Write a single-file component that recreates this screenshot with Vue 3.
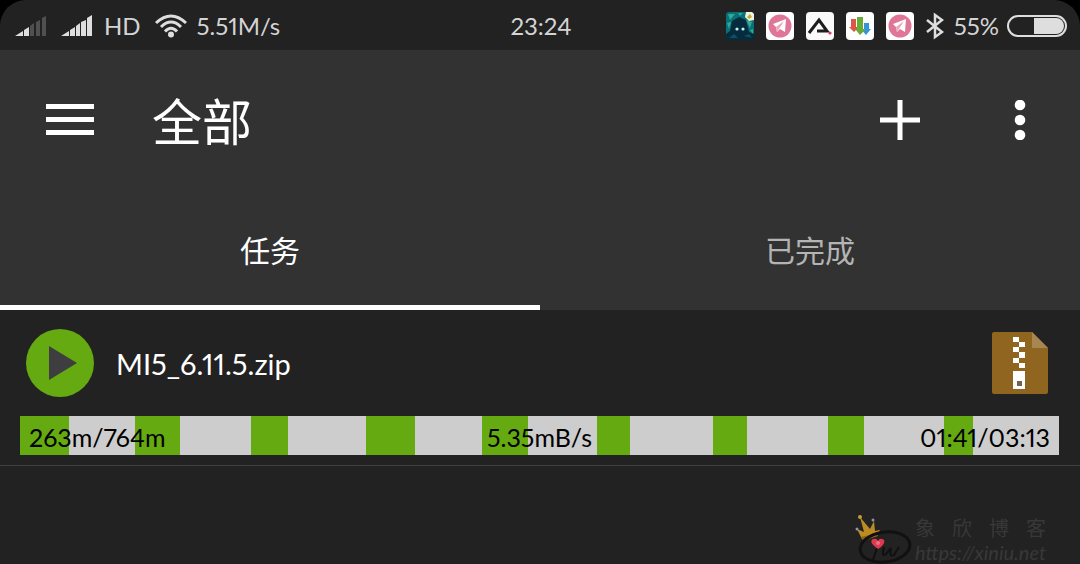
<script setup>
const segments = [49, 45, 37, 49, 46, 33, 34, 36, 30].map((w) => (w / 115.44) * 100)
</script>

<template>
  <main class="screen">
    <div class="status-frame">
      <header class="status">
        <div class="group left">
          <svg class="signal" viewBox="0 0 32 22" aria-label="SIM 1">
            <path fill="#dedede" d="M0 21L8 16V21ZM9 15L14 12V21H9Z" />
            <path fill="#505050" d="M15 11L19 8V21H15ZM21 7L25 5V21H21ZM27 3L31 1V21H27Z" />
          </svg>
          <svg class="signal second" viewBox="0 0 32 22" aria-label="SIM 2">
            <path fill="#dedede" d="M0 21L8 16V21ZM9 15L14 12V21H9ZM15 11L19 8V21H15ZM20 7L25 5V21H20ZM26 3L31 0V21H26Z" />
          </svg>
          <span class="hd">HD</span>
          <svg class="wifi" viewBox="0 0 32 24" aria-label="Wi-Fi">
            <g fill="none" stroke="#dedede" stroke-width="3">
              <path d="M1 9Q16-5 31 9M6 13Q16 3 26 13M10 17.500Q16 11 22 17.500" />
            </g>
            <circle cx="16" cy="20.500" r="3" fill="#dedede" />
          </svg>
          <span>5.51M/s</span>
        </div>
        <time class="clock">23:24</time>
        <div class="group right">
          <svg class="app" viewBox="0 0 28 28">
            <rect width="28" height="28" rx="3" fill="#087078" />
            <path fill="#35a894" d="M2 2H9L4 8ZM20 8L26 10L24 16ZM1 11L5 10L3 17ZM12 1H17L14 4ZM24 18L27 17V22Z" />
            <path fill="#062b3c" d="M0 28V22L4 19L6 9L13 5L20 8L23 20L28 22V28Z" />
            <path fill="#0a5261" d="M3 26L8 22L12 26ZM18 24L23 22L26 26Z" />
            <path fill="#eef4df" d="M20 0H26L28 2V8L23 9L19 5Z" />
            <path fill="#c2ae32" d="M24 2L26 5L23 7L21 5Z" />
            <circle cx="11" cy="17" r="1.600" fill="#b8f5fa" /><circle cx="17" cy="17" r="1.600" fill="#b8f5fa" />
          </svg>
          <svg class="app" viewBox="0 0 28 28">
            <rect width="28" height="28" rx="4" fill="#fff" /><circle cx="14" cy="14" r="11.500" fill="#df7698" />
            <path fill="#fff" d="M7 12L20 7L19 20L14 17L11 20L10 15Z" />
            <path fill="#eaa9bd" d="M10 15L18 9L13 17L11 20Z" />
          </svg>
          <svg class="app" viewBox="0 0 28 28">
            <rect width="28" height="28" rx="4" fill="#fafafa" />
            <path d="M3 21L13 8L21 19H11" fill="none" stroke="#1d1d1d" stroke-width="3" />
            <circle cx="24" cy="21" r="1.600" fill="#dc3b70" />
          </svg>
          <svg class="app" viewBox="0 0 28 28">
            <rect width="28" height="28" rx="4" fill="#fff" />
            <path fill="#db5747" d="M5 7H10V15H13L8 20L3 15H5Z" />
            <path fill="#3594dc" d="M18 11H23V17H25L20 23L15 17H18Z" />
            <path fill="#65ad36" d="M11 5H17V17H20L14 23L9 17H11Z" />
          </svg>
          <svg class="app" viewBox="0 0 28 28">
            <rect width="28" height="28" rx="4" fill="#fff" /><circle cx="14" cy="14" r="11.500" fill="#df7698" />
            <path fill="#fff" d="M7 12L20 7L19 20L14 17L11 20L10 15Z" />
            <path fill="#eaa9bd" d="M10 15L18 9L13 17L11 20Z" />
          </svg>
          <svg class="bluetooth" viewBox="0 0 18 26" aria-label="Bluetooth">
            <path d="M1 7L16 19L9 24V2L16 7L1 19" fill="none" stroke="#dedede" stroke-width="2.500" />
          </svg>
          <span class="percent">55%</span>
          <svg class="battery" viewBox="0 0 60 24" aria-label="Battery">
            <rect x="1" y="2" width="58" height="20" rx="10" fill="none" stroke="#dedede" stroke-width="2" />
            <path fill="#dedede" d="M27 4H49A8 8 0 0 1 49 20H27Z" />
          </svg>
        </div>
      </header>
    </div>

    <div class="toolbar">
      <button class="icon-button" aria-label="Menu">
        <svg width="48" height="34" viewBox="0 0 48 34"><path fill="#fff" d="M0 1H48V6H0ZM0 14H48V19H0ZM0 27H48V32H0Z" /></svg>
      </button>
      <h1>全部</h1>
      <button class="icon-button add" aria-label="Add">
        <svg width="40" height="40" viewBox="0 0 40 40"><path d="M20 0V40M0 20H40" stroke="#fff" stroke-width="5" /></svg>
      </button>
      <button class="icon-button more" aria-label="More">
        <svg width="12" height="40" viewBox="0 0 12 40" fill="#fff"><circle cx="6" cy="5" r="5.300" /><circle cx="6" cy="20" r="5.300" /><circle cx="6" cy="35" r="5.300" /></svg>
      </button>
    </div>

    <nav class="tabs">
      <button class="tab active">任务</button>
      <button class="tab">已完成</button>
    </nav>

    <section class="task">
      <div class="file">
        <button class="icon-button" aria-label="Start">
          <svg width="68" height="68" viewBox="0 0 68 68"><circle cx="34" cy="34" r="34" fill="#65aa10" /><path fill="#3e3e40" d="M23 17L51 34L23 51Z" /></svg>
        </button>
        <span class="name">MI5_6.11.5.zip</span>
        <svg class="archive" width="56" height="62" viewBox="0 0 56 62">
          <path fill="#90651f" d="M2 0H40L56 16V60Q56 62 54 62H2Q0 62 0 60V2Q0 0 2 0Z" />
          <path fill="#a88651" d="M40 0L56 16H40Z" />
          <path fill="#fff" d="M21 5H27V10H33V15H27V20H33V26H27V31H33V36H27V31H21V26H27V20H21V15H27V10H21ZM21 39H33V57H21Z" />
          <rect x="25" y="49" width="5" height="5" fill="#78624a" />
        </svg>
      </div>
      <div class="progress">
        <div class="segments">
          <div v-for="(s, i) in segments" :key="i" class="segment"><div class="done" :style="{ width: s + '%' }"></div></div>
        </div>
        <div class="labels"><span>263m/764m</span><span>5.35mB/s</span><span>01:41/03:13</span></div>
      </div>
    </section>

    <footer class="brand">
      <svg width="60" height="50" viewBox="0 0 60 50">
        <path fill="#bd8b24" d="M7 25L2 15L9 18L5 3L15 15L19 7L20 17L25 16L22 22Z" />
        <path fill="#8b6515" d="M6 23L22 19L23 22L8 27Z" />
        <g fill="#9292aa"><circle cx="2" cy="15" r="1.500" /><circle cx="18" cy="6" r="1.500" /></g><circle cx="5" cy="3" r="2" fill="#c59d32" />
        <ellipse cx="30" cy="33" rx="25" ry="15" transform="rotate(-8 30 33)" fill="none" stroke="#111" stroke-width="3" />
        <path d="M22 34L18 46M29 33Q26 44 31 40L36 34Q34 44 39 41L44 33" fill="none" stroke="#101010" stroke-width="2" />
        <path fill="#df3850" d="M23 35Q13 28 18 25Q22 24 23 27Q25 23 29 26Q31 30 23 35Z" /><circle cx="23" cy="29" r="2" fill="#e77580" />
      </svg>
      <div class="brand-text">
        <span class="brand-name"><span>象</span><span>欣</span><span>博</span><span>客</span></span>
        <span class="brand-url">https://xiniu.net</span>
      </div>
    </footer>
  </main>
</template>

<style>
body { margin: 0; background: #222; }
</style>

<style scoped>
* { box-sizing: border-box; }
.screen { min-height: 100vh; display: flex; flex-direction: column; background: #222; color: #fff; font-family: Lato, "Noto Sans CJK SC", sans-serif; font-variant-numeric: proportional-nums; overflow: hidden; }
.status-frame { background: #000; }
.status { height: 50px; display: grid; grid-template-columns: 1fr auto 1fr; align-items: center; padding: 2px 13px 0 15px; background: #222; border-radius: 26px 26px 0 0; color: #d4d4d4; font-size: 24px; line-height: 32px; font-weight: 400; }
.group { display: flex; align-items: center; white-space: nowrap; }
.right { justify-content: flex-end; gap: 12px; }
.signal { width: 32px; height: 22px; }
.second { margin-left: 14px; }
.hd { margin: 0 14px 0 11px; }
.wifi { width: 32px; height: 24px; margin-right: 10px; }
.app { width: 28px; height: 28px; flex: none; }
.bluetooth { width: 18px; height: 28px; }
.percent { margin: 0 -4px 0 -2px; }
.battery { width: 60px; height: 24px; }
button { margin: 0; padding: 0; border: 0; background: none; color: inherit; font: inherit; }
.icon-button { display: flex; }
.toolbar { height: 140px; display: flex; align-items: center; padding: 0 54px 0 46px; background: #323232; }
h1 { margin: 0 0 0 58px; padding-top: 4px; font-size: 50px; line-height: 60px; font-weight: 400; }
.add { margin-left: auto; }
.more { margin-left: 94px; }
.tabs { height: 120px; display: flex; background: #323232; }
.tab { flex: 1; padding-top: 4px; border-bottom: 5px solid transparent; font-size: 30px; line-height: 40px; font-weight: 400; color: #b4b4b4; }
.active { border-color: #fff; color: #fff; }
.task { padding: 19px 21px 10px 20px; border-bottom: 1px solid #414141; }
.file { display: flex; align-items: center; padding: 0 11px 0 6px; }
.name { margin-left: 22px; padding-top: 2px; font-size: 29px; line-height: 44px; font-weight: 400; white-space: nowrap; }
.archive { margin-left: auto; }
.progress { display: grid; margin-top: 19px; height: 39px; background: #cdcdcd; color: #000; }
.segments, .labels { grid-area: 1 / 1; }
.segments { display: flex; }
.segment { flex: 1; }
.done { height: 100%; background: #65aa10; }
.labels { display: grid; grid-template-columns: 1fr auto 1fr; align-items: center; padding: 3px 9px 0; font-size: 25px; line-height: 36px; }
.labels span:last-child { text-align: right; }
.brand { margin-top: auto; margin-left: auto; display: flex; align-items: flex-end; padding-right: 34px; color: #383838; }
.brand-text { display: flex; flex-direction: column; line-height: 24px; }
.brand-name { display: flex; justify-content: space-between; font-size: 20px; }
.brand-url { font-size: 20px; font-style: italic; }
</style>
